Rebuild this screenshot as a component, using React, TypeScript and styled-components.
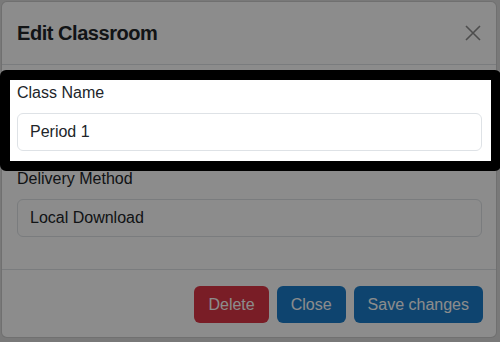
import React from 'react'
import styled, { createGlobalStyle } from 'styled-components'

const GlobalStyle = createGlobalStyle`
  * { box-sizing: border-box; }
  html, body {
    margin: 0;
    padding: 0;
    background: #dcdcdc;
    font-family: "Liberation Sans", Arial, sans-serif;
    color: #212529;
  }
`

const Page = styled.div`
  width: 500px;
  height: 342px;
  padding: 1px 0 0 1px;
  overflow: hidden;
`

const Modal = styled.div`
  width: 496px;
  height: 337px;
  background: #fff;
  border: 1px solid rgba(0, 0, 0, 0.2);
  border-radius: 6px;
  display: flex;
  flex-direction: column;
`

const Header = styled.div`
  display: flex;
  align-items: center;
  justify-content: space-between;
  padding: 16px 14px 16px 15px;
  border-bottom: 1px solid #dee2e6;
`

const Title = styled.h5`
  margin: 0;
  font-size: 20px;
  line-height: 30px;
  font-weight: 700;
  letter-spacing: -0.45px;
`

const CloseX = styled.button`
  width: 18px;
  height: 18px;
  padding: 0;
  border: 0;
  background: transparent;
  display: flex;
  align-items: center;
  justify-content: center;
`

const Body = styled.div`
  padding: 16px 14px 16px 15px;
  border-bottom: 1px solid #dee2e6;
`

const Group = styled.div<{ $spotlight?: boolean }>`
  margin-bottom: 16px;
  position: ${p => (p.$spotlight ? 'relative' : 'static')};
  z-index: ${p => (p.$spotlight ? 3 : 'auto')};

  ${p =>
    p.$spotlight &&
    `
    &::before {
      content: '';
      position: absolute;
      top: -11px;
      left: -17px;
      right: -19px;
      bottom: -20px;
      background: #fff;
      border: 10px solid #000;
      border-radius: 6px;
      z-index: -1;
    }
  `}
`

const Label = styled.label`
  display: block;
  font-size: 16px;
  line-height: 24px;
  margin-bottom: 8px;
`

const Input = styled.input`
  display: block;
  width: 100%;
  height: 38px;
  padding: 6px 12px;
  font-family: inherit;
  font-size: 16px;
  line-height: 24px;
  color: #212529;
  background: #fff;
  border: 1px solid #dee2e6;
  border-radius: 6px;
  outline: none;
`

const Footer = styled.div`
  display: flex;
  justify-content: flex-end;
  gap: 8px;
  padding: 16px 13px 0 0;
`

const Button = styled.button<{ $variant: 'danger' | 'primary' }>`
  height: 37px;
  padding: 0 14px;
  font-family: inherit;
  font-size: 16px;
  color: #fff;
  border: 0;
  border-radius: 6px;
  background: ${p => (p.$variant === 'danger' ? '#dc3545' : '#1a7dcb')};
`

const Dim = styled.div`
  position: fixed;
  inset: 0;
  background: rgba(0, 0, 0, 0.45);
  z-index: 2;
`

export default function App() {
  return (
    <>
      <GlobalStyle />
      <Page>
        <Modal>
          <Header>
            <Title>Edit Classroom</Title>
            <CloseX aria-label="Close">
              <svg width="16" height="16" viewBox="0 0 16 16">
                <path d="M1 1L15 15M15 1L1 15" stroke="#000" strokeOpacity="0.45" strokeWidth="1.6" />
              </svg>
            </CloseX>
          </Header>
          <Body>
            <Group $spotlight>
              <Label>Class Name</Label>
              <Input defaultValue="Period 1" />
            </Group>
            <Group>
              <Label>Delivery Method</Label>
              <Input defaultValue="Local Download" />
            </Group>
          </Body>
          <Footer>
            <Button $variant="danger">Delete</Button>
            <Button $variant="primary">Close</Button>
            <Button $variant="primary">Save changes</Button>
          </Footer>
        </Modal>
      </Page>
      <Dim />
    </>
  )
}
